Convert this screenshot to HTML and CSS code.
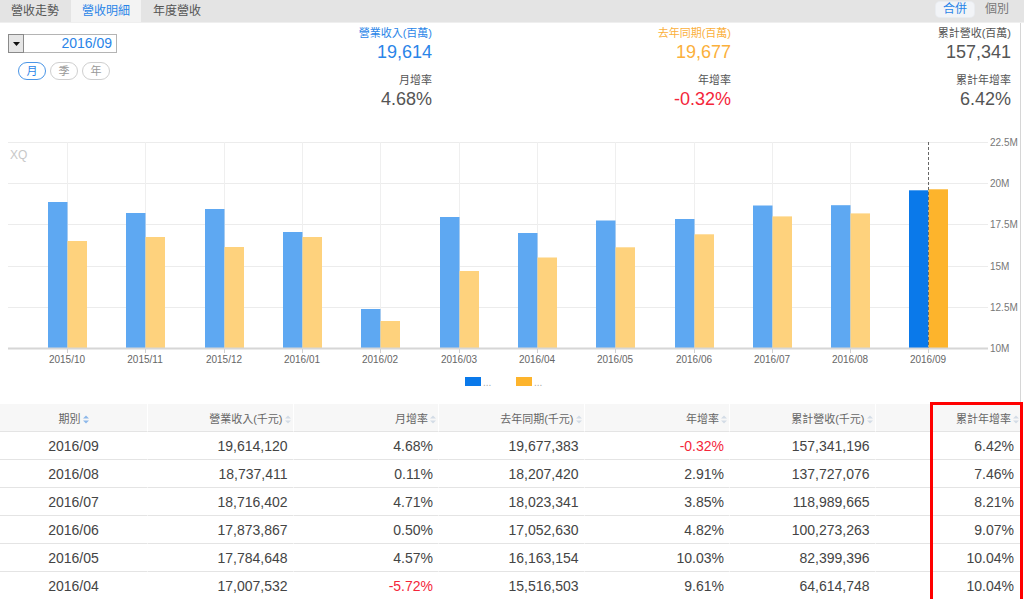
FILE: index.html
```html
<!DOCTYPE html>
<html>
<head>
<meta charset="utf-8">
<link rel="stylesheet" href="styles.css">
</head>
<body>
<div class="page">
  <div class="topbar">
    <div class="tabs">
      <span class="tab">營收走勢</span>
      <span class="tab active">營收明細</span>
      <span class="tab">年度營收</span>
    </div>
    <div class="switch">
      <span class="sw on">合併</span>
      <span class="sw">個別</span>
    </div>
  </div>
  <div class="main">
    <div class="summary">
      <div class="controls">
        <div class="datepick">
          <span class="dd"><svg width="7" height="4" viewBox="0 0 7 4"><path d="M0 0H7L3.5 4Z" fill="#111"/></svg></span>
          <span class="date">2016/09</span>
        </div>
        <div class="periods">
          <span class="pill on">月</span>
          <span class="pill">季</span>
          <span class="pill">年</span>
        </div>
      </div>
      <div class="stat">
        <div class="lbl blue">營業收入(百萬)</div>
        <div class="val blue">19,614</div>
        <div class="lbl lbl2">月增率</div>
        <div class="val">4.68%</div>
      </div>
      <div class="stat">
        <div class="lbl orange">去年同期(百萬)</div>
        <div class="val orange">19,677</div>
        <div class="lbl lbl2">年增率</div>
        <div class="val red">-0.32%</div>
      </div>
      <div class="stat">
        <div class="lbl">累計營收(百萬)</div>
        <div class="val">157,341</div>
        <div class="lbl lbl2">累計年增率</div>
        <div class="val">6.42%</div>
      </div>
    </div>
    <div class="chart">
      <svg width="1020" height="290" viewBox="0 113 1020 290">
        <text x="10" y="159" class="wm">XQ</text>
        <g class="grid">
          <line x1="8" y1="142.5" x2="988" y2="142.5"/>
          <line x1="8" y1="183.5" x2="988" y2="183.5"/>
          <line x1="8" y1="224.5" x2="988" y2="224.5"/>
          <line x1="8" y1="266.5" x2="988" y2="266.5"/>
          <line x1="8" y1="307.5" x2="988" y2="307.5"/>
        </g>
        <g class="vgrid">
          <line x1="67.5" y1="142" x2="67.5" y2="348"/>
          <line x1="145.5" y1="142" x2="145.5" y2="348"/>
          <line x1="224.5" y1="142" x2="224.5" y2="348"/>
          <line x1="302.5" y1="142" x2="302.5" y2="348"/>
          <line x1="380.5" y1="142" x2="380.5" y2="348"/>
          <line x1="459.5" y1="142" x2="459.5" y2="348"/>
          <line x1="537.5" y1="142" x2="537.5" y2="348"/>
          <line x1="615.5" y1="142" x2="615.5" y2="348"/>
          <line x1="694.5" y1="142" x2="694.5" y2="348"/>
          <line x1="772.5" y1="142" x2="772.5" y2="348"/>
          <line x1="850.5" y1="142" x2="850.5" y2="348"/>
        </g>
        <g class="bl">
          <rect x="48" y="202" width="19.5" height="146"/>
          <rect x="126" y="213" width="19.5" height="135"/>
          <rect x="205" y="209" width="19.5" height="139"/>
          <rect x="283" y="232" width="19.5" height="116"/>
          <rect x="361" y="309" width="19.5" height="39"/>
          <rect x="440" y="217" width="19.5" height="131"/>
          <rect x="518" y="233" width="19.5" height="115"/>
          <rect x="596" y="220.5" width="19.5" height="127.5"/>
          <rect x="675" y="219" width="19.5" height="129"/>
          <rect x="753" y="205.5" width="19.5" height="142.5"/>
          <rect x="831" y="205.2" width="19.5" height="142.8"/>
        </g>
        <g class="or">
          <rect x="67.5" y="241" width="19.5" height="107"/>
          <rect x="145.5" y="237" width="19.5" height="111"/>
          <rect x="224.5" y="247" width="19.5" height="101"/>
          <rect x="302.5" y="237" width="19.5" height="111"/>
          <rect x="380.5" y="321" width="19.5" height="27"/>
          <rect x="459.5" y="271" width="19.5" height="77"/>
          <rect x="537.5" y="257.5" width="19.5" height="90.5"/>
          <rect x="615.5" y="247.3" width="19.5" height="100.7"/>
          <rect x="694.5" y="234.3" width="19.5" height="113.7"/>
          <rect x="772.5" y="216.4" width="19.5" height="131.6"/>
          <rect x="850.5" y="213.4" width="19.5" height="134.6"/>
        </g>
        <rect x="909" y="190.3" width="19.5" height="157.7" fill="#0a79ea"/>
        <rect x="928.5" y="189.3" width="19.5" height="158.7" fill="#fdb42c"/>
        <line x1="928.5" y1="142" x2="928.5" y2="348" class="cross"/>
        <line x1="8" y1="348.5" x2="988" y2="348.5" class="axis"/>
        <g class="ticks">
          <line x1="67.5" y1="349" x2="67.5" y2="353"/>
          <line x1="145.5" y1="349" x2="145.5" y2="353"/>
          <line x1="224.5" y1="349" x2="224.5" y2="353"/>
          <line x1="302.5" y1="349" x2="302.5" y2="353"/>
          <line x1="380.5" y1="349" x2="380.5" y2="353"/>
          <line x1="459.5" y1="349" x2="459.5" y2="353"/>
          <line x1="537.5" y1="349" x2="537.5" y2="353"/>
          <line x1="615.5" y1="349" x2="615.5" y2="353"/>
          <line x1="694.5" y1="349" x2="694.5" y2="353"/>
          <line x1="772.5" y1="349" x2="772.5" y2="353"/>
          <line x1="850.5" y1="349" x2="850.5" y2="353"/>
          <line x1="928.5" y1="349" x2="928.5" y2="353"/>
        </g>
        <g class="xl">
          <text x="67" y="363">2015/10</text>
          <text x="145" y="363">2015/11</text>
          <text x="224" y="363">2015/12</text>
          <text x="302" y="363">2016/01</text>
          <text x="380" y="363">2016/02</text>
          <text x="459" y="363">2016/03</text>
          <text x="537" y="363">2016/04</text>
          <text x="615" y="363">2016/05</text>
          <text x="694" y="363">2016/06</text>
          <text x="772" y="363">2016/07</text>
          <text x="850" y="363">2016/08</text>
          <text x="928" y="363">2016/09</text>
        </g>
        <g class="yl">
          <text x="990" y="146">22.5M</text>
          <text x="990" y="187">20M</text>
          <text x="990" y="228">17.5M</text>
          <text x="990" y="270">15M</text>
          <text x="990" y="311">12.5M</text>
          <text x="990" y="352">10M</text>
        </g>
        <rect x="465" y="377" width="16" height="9" fill="#0a79ea"/>
        <text x="483" y="386" class="dots">...</text>
        <rect x="516" y="377" width="16" height="9" fill="#fdb42c"/>
        <text x="534" y="386" class="dots">...</text>
      </svg>
    </div>
  </div>
  <table class="tbl">
    <thead>
      <tr>
        <th class="c">期別<svg class="sort on" width="6" height="9" viewBox="0 0 6 9"><path d="M0 3.5L3 0.5L6 3.5Z M0 5.5L3 8.5L6 5.5Z"/></svg></th>
        <th>營業收入(千元)<svg class="sort" width="6" height="9" viewBox="0 0 6 9"><path d="M0 3.5L3 0.5L6 3.5Z M0 5.5L3 8.5L6 5.5Z"/></svg></th>
        <th>月增率<svg class="sort" width="6" height="9" viewBox="0 0 6 9"><path d="M0 3.5L3 0.5L6 3.5Z M0 5.5L3 8.5L6 5.5Z"/></svg></th>
        <th>去年同期(千元)<svg class="sort" width="6" height="9" viewBox="0 0 6 9"><path d="M0 3.5L3 0.5L6 3.5Z M0 5.5L3 8.5L6 5.5Z"/></svg></th>
        <th>年增率<svg class="sort" width="6" height="9" viewBox="0 0 6 9"><path d="M0 3.5L3 0.5L6 3.5Z M0 5.5L3 8.5L6 5.5Z"/></svg></th>
        <th>累計營收(千元)<svg class="sort" width="6" height="9" viewBox="0 0 6 9"><path d="M0 3.5L3 0.5L6 3.5Z M0 5.5L3 8.5L6 5.5Z"/></svg></th>
        <th>累計年增率<svg class="sort" width="6" height="9" viewBox="0 0 6 9"><path d="M0 3.5L3 0.5L6 3.5Z M0 5.5L3 8.5L6 5.5Z"/></svg></th>
      </tr>
    </thead>
    <tbody>
      <tr><td class="c">2016/09</td><td>19,614,120</td><td>4.68%</td><td>19,677,383</td><td class="red">-0.32%</td><td>157,341,196</td><td>6.42%</td></tr>
      <tr><td class="c">2016/08</td><td>18,737,411</td><td>0.11%</td><td>18,207,420</td><td>2.91%</td><td>137,727,076</td><td>7.46%</td></tr>
      <tr><td class="c">2016/07</td><td>18,716,402</td><td>4.71%</td><td>18,023,341</td><td>3.85%</td><td>118,989,665</td><td>8.21%</td></tr>
      <tr><td class="c">2016/06</td><td>17,873,867</td><td>0.50%</td><td>17,052,630</td><td>4.82%</td><td>100,273,263</td><td>9.07%</td></tr>
      <tr><td class="c">2016/05</td><td>17,784,648</td><td>4.57%</td><td>16,163,154</td><td>10.03%</td><td>82,399,396</td><td>10.04%</td></tr>
      <tr><td class="c">2016/04</td><td>17,007,532</td><td class="red">-5.72%</td><td>15,516,503</td><td>9.61%</td><td>64,614,748</td><td>10.04%</td></tr>
    </tbody>
  </table>
  <div class="highlight"></div>
</div>
</body>
</html>
```

FILE: styles.css
```css
* { box-sizing: border-box; }
html, body { margin: 0; padding: 0; background: #fff; }
body {
  font-family: "Liberation Sans", "Noto Sans CJK TC", Arial, sans-serif;
  color: #444;
  width: 1024px;
  height: 599px;
  overflow: hidden;
}
.page { position: relative; width: 1024px; }

.topbar {
  display: flex;
  justify-content: space-between;
  align-items: stretch;
  height: 23px;
  background: #e4e4e4;
  border-bottom: 1px solid #efefef;
}
.tabs { display: flex; gap: 1px; }
.tab {
  width: 70px;
  text-align: center;
  font-size: 12px;
  line-height: 22px;
  color: #555;
}
.tab.active { background: #f3f3f3; color: #2a85e8; }
.switch { display: flex; align-items: flex-start; padding-top: 2px; padding-right: 14px; gap: 10px; }
.sw { font-size: 12px; line-height: 15px; color: #777; padding: 0 1px; }
.sw.on { background: #f2f4f7; color: #2a85e8; border-radius: 4px; padding: 0 7px; box-shadow: 0 0 0 1px #e9ecf0; }

.main { width: 1021px; border-right: 1px solid #d6d6d6; }

.summary {
  display: grid;
  grid-template-columns: 130px 302px 299px 280px;
  height: 90px;
}
.controls { padding: 11px 0 0 8px; }
.datepick { display: flex; height: 19px; }
.dd {
  width: 16px;
  height: 19px;
  background: #e6e6e6;
  border: 1px solid #8a8a8a;
  display: flex;
  align-items: center;
  justify-content: center;
}
.date {
  width: 93px;
  height: 19px;
  border: 1px solid #b4b4b4;
  border-left: none;
  text-align: right;
  font-size: 14px;
  line-height: 17px;
  color: #2a85e8;
  padding-right: 4px;
}
.periods { display: flex; gap: 4px; margin: 9px 0 0 10px; }
.pill {
  width: 28px;
  height: 18px;
  border: 1px solid #cfcfcf;
  border-radius: 9px;
  text-align: center;
  font-size: 11px;
  line-height: 16px;
  color: #999;
}
.pill.on { border-color: #4a95e6; color: #2a85e8; }

.stat { text-align: right; padding-top: 3px; }
.lbl { font-size: 11px; line-height: 14px; color: #555; }
.lbl2 { margin-top: 10px; }
.val { font-size: 18px; line-height: 22px; color: #555; margin-top: 1px; }
.blue { color: #2a85e8; }
.orange { color: #fbb03b; }
.red { color: #f4263a; }

.chart { height: 291px; }
.chart svg { display: block; }
.wm { font-size: 12px; fill: #c8c8c8; }
.grid line { stroke: #ececec; stroke-width: 1; }
.vgrid line { stroke: #efefef; stroke-width: 1; }
.axis { stroke: #d6d6d6; stroke-width: 2; }
.ticks line { stroke: #d0d0d0; stroke-width: 1; }
.bl rect { fill: #5ea8f2; }
.or rect { fill: #fed27d; }
.cross { stroke: #666; stroke-width: 1; stroke-dasharray: 3 2; }
.xl text { font-size: 10px; fill: #666; text-anchor: middle; }
.yl text { font-size: 10px; fill: #777; }
.dots { font-size: 10px; fill: #aaa; }

.tbl {
  width: 1020px;
  border-collapse: separate;
  border-spacing: 0;
  table-layout: fixed;
}
.tbl th, .tbl td {
  width: 145.5px;
  text-align: right;
  border-left: 1px solid #fff;
  border-bottom: 1px solid #e4e4e4;
  white-space: nowrap;
}
.tbl th:first-child, .tbl td:first-child { width: 147px; border-left: none; }
.tbl th {
  height: 28px;
  font-size: 11px;
  font-weight: normal;
  color: #666;
  background: #f7f7f7;
  padding: 0 2px 0 0;
}
.tbl th:last-child { padding-right: 1px; }
.tbl td {
  height: 28px;
  font-size: 14px;
  color: #444;
  padding: 0 5px 0 0;
}
.tbl td:last-child { padding-right: 6px; }
.tbl .c { text-align: center; padding: 0; }
.tbl td.red { color: #f4263a; }
.sort { margin-left: 2px; vertical-align: -1px; fill: #d3dce6; }
.sort.on { fill: #8db8ea; }

.highlight {
  position: absolute;
  left: 930px;
  top: 402px;
  width: 93px;
  height: 210px;
  border: 3px solid #f00;
}
```
